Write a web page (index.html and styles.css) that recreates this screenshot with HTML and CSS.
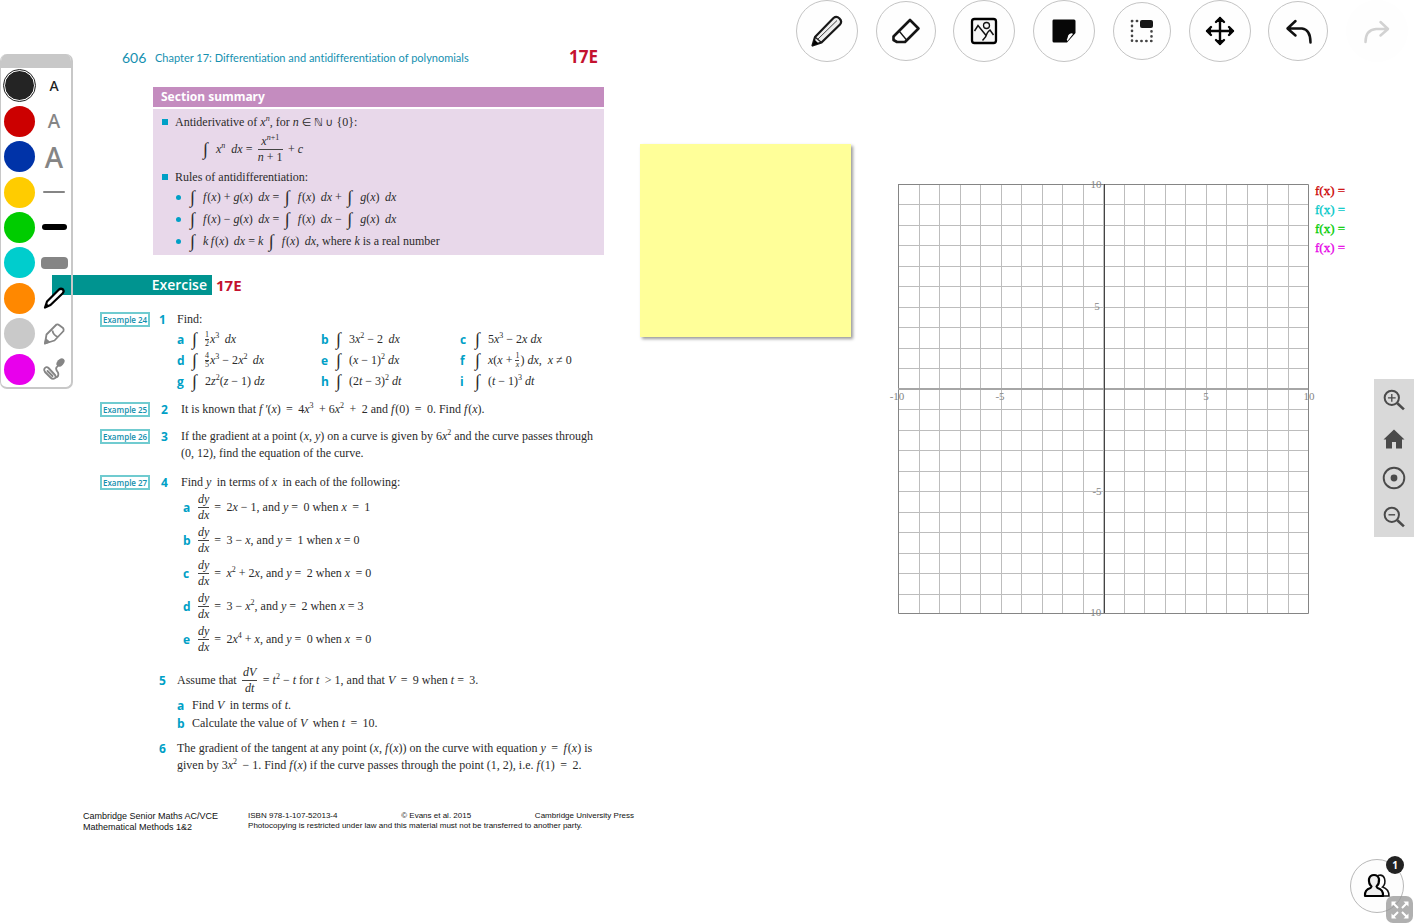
FILE: index.html
```html
<!DOCTYPE html>
<html lang="en">
<head>
<meta charset="utf-8">
<title>Whiteboard</title>
<link rel="stylesheet" href="styles.css">
</head>
<body>
<main class="board">

<article class="doc">
  <header class="doc-head">
    <span class="page-no">606</span>
    <span class="chapter">Chapter 17: Differentiation and antidifferentiation of polynomials</span>
    <span class="section-no">17E</span>
  </header>

  <section class="summary">
    <h2>Section summary</h2>
    <div class="summary-body">
      <p class="square"><span>Antiderivative of <i>x</i><sup><i>n</i></sup>, for <i>n</i> <span class="set">∈ ℕ ∪</span> {0}:</span></p>
      <p class="formula"><span><span class="int">∫</span><i>x</i><sup><i>n</i></sup>&nbsp; <i>dx</i> =&nbsp;&thinsp;</span><span class="frac"><span><i>x</i><sup><i>n</i>+1</sup></span><span><i>n</i> + 1</span></span><span>&nbsp;&thinsp;+ <i>c</i></span></p>
      <p class="square">Rules of antidifferentiation:</p>
      <ul class="rules">
        <li><span><span class="int">∫</span><i>f</i>&hairsp;(<i>x</i>) + <i>g</i>(<i>x</i>)&thinsp; <i>dx</i> =&thinsp; <span class="int">∫</span><i>f</i>&hairsp;(<i>x</i>)&thinsp; <i>dx</i> +&thinsp; <span class="int">∫</span><i>g</i>(<i>x</i>)&thinsp; <i>dx</i></span></li>
        <li><span><span class="int">∫</span><i>f</i>&hairsp;(<i>x</i>) − <i>g</i>(<i>x</i>)&thinsp; <i>dx</i> =&thinsp; <span class="int">∫</span><i>f</i>&hairsp;(<i>x</i>)&thinsp; <i>dx</i> −&thinsp; <span class="int">∫</span><i>g</i>(<i>x</i>)&thinsp; <i>dx</i></span></li>
        <li><span><span class="int">∫</span><i>k&thinsp;f</i>&hairsp;(<i>x</i>)&thinsp; <i>dx</i> = <i>k</i>&thinsp; <span class="int">∫</span><i>f</i>&hairsp;(<i>x</i>)&thinsp; <i>dx</i>, where <i>k</i> is a real number</span></li>
      </ul>
    </div>
  </section>

  <h2 class="exercise"><span class="exercise-bar">Exercise</span><span class="exercise-no">17E</span></h2>

  <section class="question q1">
    <span><span class="tag">Example 24</span></span><b class="num">1</b>
    <div>
      <p>Find:</p>
      <div class="parts">
        <p><b>a</b><span><span class="int">∫</span><span class="frac small"><span>1</span><span>2</span></span>&hairsp;<i>x</i><sup>3</sup>&thinsp; <i>dx</i></span></p>
        <p><b>b</b><span><span class="int">∫</span>3<i>x</i><sup>2</sup> − 2&thinsp; <i>dx</i></span></p>
        <p><b>c</b><span><span class="int">∫</span>5<i>x</i><sup>3</sup> − 2<i>x</i> <i>dx</i></span></p>
        <p><b>d</b><span><span class="int">∫</span><span class="frac small"><span>4</span><span>5</span></span>&hairsp;<i>x</i><sup>3</sup> − 2<i>x</i><sup>2</sup>&thinsp; <i>dx</i></span></p>
        <p><b>e</b><span><span class="int">∫</span>(<i>x</i> − 1)<sup>2</sup> <i>dx</i></span></p>
        <p><b>f</b><span><span class="int">∫</span><i>x</i>(<i>x</i> + <span class="frac small"><span>1</span><span><i>x</i></span></span>&hairsp;) <i>dx</i>,&ensp;<i>x</i> ≠ 0</span></p>
        <p><b>g</b><span><span class="int">∫</span>2<i>z</i><sup>2</sup>(<i>z</i> − 1) <i>dz</i></span></p>
        <p><b>h</b><span><span class="int">∫</span>(2<i>t</i> − 3)<sup>2</sup> <i>dt</i></span></p>
        <p><b>i</b><span><span class="int">∫</span>(<i>t</i> − 1)<sup>3</sup> <i>dt</i></span></p>
      </div>
    </div>
  </section>

  <section class="question inset q2">
    <span><span class="tag">Example 25</span></span><b class="num">2</b>
    <p>It is known that <i>f&thinsp;′</i>(<i>x</i>)&thinsp; =&thinsp; 4<i>x</i><sup>3</sup>&thinsp; + 6<i>x</i><sup>2</sup>&thinsp; +&thinsp; 2 and <i>f</i>&hairsp;(0)&thinsp; =&thinsp; 0. Find <i>f</i>&hairsp;(<i>x</i>).</p>
  </section>

  <section class="question inset q3">
    <span><span class="tag">Example 26</span></span><b class="num">3</b>
    <p>If the gradient at a point (<i>x</i>, <i>y</i>) on a curve is given by 6<i>x</i><sup>2</sup> and the curve passes through<br>(0, 12), find the equation of the curve.</p>
  </section>

  <section class="question inset q4">
    <span><span class="tag">Example 27</span></span><b class="num">4</b>
    <div>
      <p>Find <i>y</i>&thinsp; in terms of <i>x</i>&thinsp; in each of the following:</p>
      <div class="derivs">
        <p><b>a</b><span class="frac"><span><i>dy</i></span><span><i>dx</i></span></span><span>=&thinsp; 2<i>x</i> − 1, and <i>y</i> =&thinsp; 0 when <i>x</i>&thinsp; =&thinsp; 1</span></p>
        <p><b>b</b><span class="frac"><span><i>dy</i></span><span><i>dx</i></span></span><span>=&thinsp; 3 − <i>x</i>, and <i>y</i> =&thinsp; 1 when <i>x</i> = 0</span></p>
        <p><b>c</b><span class="frac"><span><i>dy</i></span><span><i>dx</i></span></span><span>=&thinsp; <i>x</i><sup>2</sup> + 2<i>x</i>, and <i>y</i> =&thinsp; 2 when <i>x</i>&thinsp; = 0</span></p>
        <p><b>d</b><span class="frac"><span><i>dy</i></span><span><i>dx</i></span></span><span>=&thinsp; 3 − <i>x</i><sup>2</sup>, and <i>y</i> =&thinsp; 2 when <i>x</i> = 3</span></p>
        <p><b>e</b><span class="frac"><span><i>dy</i></span><span><i>dx</i></span></span><span>=&thinsp; 2<i>x</i><sup>4</sup> + <i>x</i>, and <i>y</i> =&thinsp; 0 when <i>x</i>&thinsp; = 0</span></p>
      </div>
    </div>
  </section>

  <section class="question q5">
    <span></span><b class="num">5</b>
    <div>
      <p class="tall"><span>Assume that&nbsp;&thinsp;</span><span class="frac"><span>&hairsp;<i>dV</i>&hairsp;</span><span><i>dt</i></span></span><span>&nbsp;&thinsp;= <i>t</i><sup>2</sup> − <i>t</i> for <i>t</i>&thinsp; &gt; 1, and that <i>V</i>&thinsp; =&thinsp; 9 when <i>t</i> =&thinsp; 3.</span></p>
      <p class="sub"><b>a</b><span>Find <i>V</i>&thinsp; in terms of <i>t</i>.</span></p>
      <p class="sub"><b>b</b><span>Calculate the value of <i>V</i>&thinsp; when <i>t</i>&thinsp; =&thinsp; 10.</span></p>
    </div>
  </section>

  <section class="question q6">
    <span></span><b class="num">6</b>
    <p>The gradient of the tangent at any point (<i>x</i>, <i>f</i>&hairsp;(<i>x</i>)) on the curve with equation <i>y</i>&thinsp; =&thinsp; <i>f</i>&hairsp;(<i>x</i>) is<br>given by 3<i>x</i><sup>2</sup>&thinsp; − 1. Find <i>f</i>&hairsp;(<i>x</i>) if the curve passes through the point (1, 2), i.e. <i>f</i>&hairsp;(1)&thinsp; =&thinsp; 2.</p>
  </section>

  <footer class="imprint">
    <p class="series">Cambridge Senior Maths AC/VCE<br>Mathematical Methods 1&amp;2</p>
    <div class="rights">
      <p class="rights-row"><span>ISBN 978-1-107-52013-4</span><span>© Evans et al. 2015</span><span>Cambridge University Press</span></p>
      <p>Photocopying is restricted under law and this material must not be transferred to another party.</p>
    </div>
  </footer>
</article>

<div class="sticky"></div>

<section class="graph">
  <svg class="plot" viewBox="0 0 430 446" width="430" height="446" role="img" aria-label="Coordinate grid">
    <defs><pattern id="cell" x="10" y="10" width="41" height="41" patternUnits="userSpaceOnUse">
      <path d="M.5 0V41M21.5 0V41M0 .5H41M0 20.500H41" stroke="#bdbdbd" fill="none"/></pattern></defs>
    <rect x="10" y="10" width="410" height="429" fill="url(#cell)"/>
    <path d="M10.500 10V439.500H420.500V10.500H10" fill="none" stroke="#858585"/>
    <path d="M10 215H420" stroke="#a6a6a6" stroke-width="2"/><path d="M216.500 10V439" stroke="#444"/>
    <g class="axis-text">
      <text x="208" y="14" text-anchor="middle">10</text><text x="209" y="136" text-anchor="middle">5</text>
      <text x="209" y="321" text-anchor="middle">-5</text><text x="206" y="442" text-anchor="middle">-10</text>
      <text x="9" y="226" text-anchor="middle">-10</text><text x="112" y="226" text-anchor="middle">-5</text>
      <text x="318" y="226" text-anchor="middle">5</text><text x="421" y="226" text-anchor="middle">10</text>
    </g>
  </svg>
  <ul class="functions">
    <li class="fn-red">f(x) =</li><li class="fn-cyan">f(x) =</li><li class="fn-green">f(x) =</li><li class="fn-pink">f(x) =</li>
  </ul>
</section>
</main>

<aside class="palette" aria-label="Pen palette">
  <div class="palette-grip"></div>
  <div class="palette-grid">
    <button class="swatch black selected" aria-label="Black"></button><button class="txt t1" aria-label="Small text">A</button>
    <button class="swatch red" aria-label="Red"></button><button class="txt t2" aria-label="Medium text">A</button>
    <button class="swatch blue" aria-label="Blue"></button><button class="txt t3" aria-label="Large text">A</button>
    <button class="swatch yellow" aria-label="Yellow"></button><button aria-label="Thin line"><span class="stroke s1"></span></button>
    <button class="swatch green" aria-label="Green"></button><button aria-label="Medium line"><span class="stroke s2"></span></button>
    <button class="swatch cyan" aria-label="Cyan"></button><button aria-label="Thick line"><span class="stroke s3"></span></button>
    <button class="swatch orange" aria-label="Orange"></button>
    <button aria-label="Pen"><svg width="24" height="24" viewBox="0 0 24 24"><path d="M3 21.500L5 15.500L17 3.500Q19 2 21 3.500Q22.500 5.500 20.500 7.500L8.500 19Z" fill="#fff" stroke="#000" stroke-width="2.200" stroke-linejoin="round"/><path d="M3 21.500l2-4 2 2.500z"/></svg></button>
    <button class="swatch grey" aria-label="Grey"></button>
    <button aria-label="Highlighter"><svg width="24" height="24" viewBox="0 0 24 24" fill="none" stroke="#858585" stroke-width="1.800" stroke-linejoin="round"><path d="M3 21.500L4.500 12.500L14.500 2.500Q16 2 17 3L21 6Q22 7 21.500 9L12.500 18.500ZM10.500 8.500Q11 13 16 15"/><path d="M3 21.500l1-4 3 2.500z" fill="#858585"/></svg></button>
    <button class="swatch pink" aria-label="Magenta"></button>
    <button aria-label="Laser pen"><svg width="24" height="24" viewBox="0 0 24 24" fill="none" stroke="#858585" stroke-width="1.900" stroke-linecap="round" stroke-linejoin="round"><path d="M2.500 11.500Q4.500 9 6.500 11L13 18Q14.500 20.500 12.500 21.500Q10.500 22.500 8.500 20.500L3 15Q1.500 13 2.500 11.500ZM5.500 14l5 5M13.500 20.500Q17.500 19.500 16 15.500Q12.500 11 15.500 9.500"/><ellipse cx="18.500" cy="5.500" rx="4.800" ry="3.200" transform="rotate(-48 18.500 5.500)" fill="#858585" stroke="none"/></svg></button>
  </div>
</aside>

<nav class="tools" aria-label="Tools">
  <button aria-label="Pencil"><svg width="34" height="34" viewBox="0 0 34 34"><path d="M2.500 31.500L5 23L23.500 4Q26.500 1.500 29.500 4.500Q32.500 7.500 30 10.500L11.500 28.500Z" fill="#eee" stroke="#181818" stroke-width="2.200" stroke-linejoin="round"/><path d="M8 25L27 6.500" stroke="#444" stroke-width="1"/><path d="M5 23l6.500 5.500" stroke="#181818" stroke-width="1.200"/><path d="M2.500 31.500l2-6 4 4z"/></svg></button>
  <button class="md" aria-label="Eraser"><svg width="30" height="30" viewBox="0 0 30 30"><path d="M2.500 20.500L19 4L27.500 12.500L14 26H6L2.500 24Z" fill="#fff" stroke="#151515" stroke-width="2.600" stroke-linejoin="round"/><path d="M8.500 15.500L16 24.500" stroke="#151515" stroke-width="1.300"/></svg></button>
  <button aria-label="Image"><svg width="28" height="28" viewBox="0 0 28 28" fill="none" stroke="#111"><rect x="2" y="2" width="24" height="24" rx="2.500" fill="#f7f7f7" stroke="#000" stroke-width="2.300"/><circle cx="16.500" cy="8.500" r="3" stroke-width="1.300"/><path d="M4.500 14L8 8.500L16.500 19M12.500 23.500L15.500 20Q17 15 20 13L23.500 18" stroke-width="1.500"/></svg></button>
  <button aria-label="Sticky note"><svg width="24" height="24" viewBox="0 0 24 24"><path d="M1.500.5H22Q23.500.5 23.500 2V14L15 23.500H2Q.5 23.500.5 22V2Q.5.5 1.500.5Z" fill="#070707"/><path d="M15.500 22Q14 21 15.500 19Q16 15.500 17.500 15Q20 13.500 21 15Z" fill="#fff"/></svg></button>
  <button class="sm" aria-label="Select"><svg width="24" height="24" viewBox="0 0 24 24"><path d="M2 2V22H21.500V9M2 2H9" fill="none" stroke="#444" stroke-width="2.600" stroke-dasharray=".2 4.700" stroke-linecap="round"/><rect x="10" y="1" width="13" height="8" rx="2" fill="#181818"/></svg></button>
  <button aria-label="Move"><svg width="30" height="30" viewBox="0 0 30 30" fill="none" stroke="#050505" stroke-width="2.400" stroke-linecap="round" stroke-linejoin="round"><path d="M15 2V28M2 15H28M11 6l4-4 4 4M11 24l4 4 4-4M6 11l-4 4 4 4M24 11l4 4-4 4"/><path d="M11.500 6l3.500-4 3.500 4zM11.500 24l3.500 4 3.500-4zM6 11.500l-4 3.500 4 3.500zM24 11.500l4 3.500-4 3.500z" fill="#050505" stroke="none"/></svg></button>
  <button class="md" aria-label="Undo"><svg width="28" height="28" viewBox="0 0 28 28" fill="none" stroke="#111" stroke-width="2.500" stroke-linecap="round" stroke-linejoin="round"><path d="M11.500 4L3.500 11.500L11.500 18.500M4 11.500H18Q26.500 12.500 26.500 25.500"/></svg></button>
  <button class="off" aria-label="Redo" disabled><svg width="28" height="28" viewBox="0 0 28 28" fill="none" stroke="#d2d2d2" stroke-width="2.500" stroke-linecap="round" stroke-linejoin="round"><path d="M17.500 5L25 12L17.500 18.500M24.500 12H13Q2.500 13 2.500 25"/></svg></button>
</nav>

<nav class="zoom" aria-label="View">
  <button aria-label="Zoom in"><svg width="22" height="22" viewBox="1 1 20 20" fill="none" stroke="#4a4a4a"><circle cx="9" cy="9" r="6.500" stroke-width="1.800"/><path d="M5.500 9h7M9 5.500v7" stroke-width="1.200"/><path d="M14 14l6 5.500" stroke-width="2.400"/></svg></button>
  <button aria-label="Home"><svg width="22" height="22" viewBox="0 0 22 22" fill="#4a4a4a"><path d="M11 1.500L21.500 11.500H19V20.500H13V14H9V20.500H3V11.500H.5Z"/></svg></button>
  <button aria-label="Center"><svg width="24" height="24" viewBox="0 0 24 24"><circle cx="12" cy="12" r="10.300" fill="none" stroke="#4a4a4a" stroke-width="1.900"/><circle cx="12" cy="12" r="3.400" fill="#4a4a4a"/></svg></button>
  <button aria-label="Zoom out"><svg width="22" height="22" viewBox="1 1 20 20" fill="none" stroke="#4a4a4a"><circle cx="9" cy="9" r="6.500" stroke-width="1.800"/><path d="M6 9h6" stroke-width="1.300"/><path d="M14 14l6 5.500" stroke-width="2.400"/></svg></button>
</nav>

<button class="people" aria-label="Participants"><svg width="28" height="26" viewBox="0 0 28 26"><path d="M15 2.500Q20 1 21.500 5.500Q23 11 19.500 14Q26 16 26 23H19" fill="#fff" stroke="#111" stroke-width="1.500"/><path d="M2 23Q1.500 16.500 7.500 15L8.500 13.500Q5.500 10.500 6 6Q7 2 11 2T16 6Q16.500 10.500 13.500 13.500L14.500 15Q20.500 16.500 20 23Z" fill="#eee" stroke="#000" stroke-width="2.200" stroke-linejoin="round"/></svg><span class="badge">1</span></button>
<button class="expand" aria-label="Full screen"><svg width="20" height="20" viewBox="0 0 20 20" fill="#fff" stroke="#fff" stroke-width="2"><path d="M3 3l5 5M17 3l-5 5M3 17l5-5M17 17l-5-5"/><path d="M1.500 6.500v-5h5zM13.500 1.500h5v5zM1.500 13.500v5h5zM18.500 13.500v5h-5z" stroke="none"/></svg></button>
</body>
</html>
```
FILE: styles.css
```css
* { box-sizing: border-box; }
body { margin: 0; background: #fff; font-family: "Liberation Sans", Arial, sans-serif; }
p, h2, ul { margin: 0; padding: 0; }
ul { list-style: none; }
button { display: flex; align-items: center; justify-content: center; margin: 0; padding: 0; border: 0; background: none; color: inherit; font: inherit; cursor: pointer; }

/* canvas and the objects placed on it */
.board { position: relative; min-height: 100vh; overflow: hidden; }
.doc { position: absolute; left: 52px; top: 47px; width: 582px; color: #2b2b2b; font: 12px/17px "Liberation Serif", "Times New Roman", "DejaVu Sans", serif; }
.sticky { position: absolute; left: 640px; top: 144px; width: 211px; height: 193px; background: #ff9; box-shadow: 2px 2px 3px rgba(0, 0, 0, .4); }
.graph { position: absolute; left: 888px; top: 174px; display: flex; }

/* page header */
.doc-head { display: flex; align-items: center; height: 20px; padding: 0 36px 0 70px; color: #1590b0; font-family: Lato, sans-serif; font-variant-ligatures: none; line-height: 15px; }
.page-no { width: 33px; font-size: 14px; }
.chapter { flex: 1; font-size: 11px; white-space: nowrap; }
.section-no, .exercise-no { color: #c4122f; font: bold 17px/20px "Open Sans", sans-serif; }

/* summary box */
.summary { margin: 20px 30px 0 101px; }
.summary h2 { height: 20px; padding-left: 8px; background: #c48cbf; color: #fff; font: bold 12px/20px "Noto Sans", sans-serif; }
.summary-body { margin-top: 2px; padding: 4px 9px 3px; background: #e8d8ea; }
.square { display: flex; align-items: center; height: 18px; }
.square::before { content: ""; width: 6px; height: 6px; margin-right: 7px; background: #00a0c6; }
.formula { display: flex; align-items: center; height: 37px; padding-left: 41px; }
.rules li { display: flex; align-items: center; height: 22px; padding-left: 14px; white-space: nowrap; }
.rules li::before { content: ""; width: 5px; height: 5px; margin-right: 9px; border-radius: 50%; background: #00a0c6; }

/* mathematics */
sup { font-size: 8px; line-height: 0; vertical-align: 5px; }
.int { display: inline-block; width: 13px; font-size: 18px; font-style: italic; line-height: 17px; vertical-align: -2px; }
.set { font-size: 11px; }
.frac { display: inline-flex; flex-direction: column; align-items: center; vertical-align: middle; line-height: 15px; }
.frac > span:first-child { align-self: stretch; border-bottom: 1px solid #444; text-align: center; }
.frac.small { font-size: 8px; line-height: 8px; }

/* exercise */
.exercise { display: flex; height: 20px; margin-top: 20px; }
.exercise-bar { width: 160px; padding-right: 5px; background: #009490; color: #fff; font: 600 14px/20px "Open Sans", sans-serif; text-align: right; }
.exercise-no { padding-left: 4px; font-size: 15px; }
.question { display: grid; grid-template-columns: 59px 18px 1fr; margin-left: 48px; }
.question.inset { grid-template-columns: 61px 20px 1fr; }
.question b { color: #00a0c6; font-family: "Open Sans", sans-serif; }
.tag { display: inline-block; padding: 0 1px; border: 2px solid #70cbd0; color: #138fae; font: 600 8px/11px "Open Sans", sans-serif; white-space: nowrap; }
.q1 { margin-top: 16px; }
.q2 { margin-top: 9px; }
.q3 { margin-top: 10px; }
.q4 { margin-top: 12px; }
.q5 { margin-top: 8px; }
.q6 { margin-top: 7px; }
.q5 .num { line-height: 33px; }
.parts { display: grid; grid-template-columns: 144px 139px 1fr; grid-auto-rows: 21px; margin-top: 1px; }
.parts p { display: flex; align-items: center; white-space: nowrap; }
.parts b { width: 15px; }
.derivs p { display: flex; align-items: center; height: 33px; gap: 5px; padding-left: 2px; }
.derivs b { width: 10px; }
.tall { display: flex; align-items: center; height: 33px; }
.sub { display: flex; height: 18px; }
.sub b { width: 15px; }

/* imprint */
.imprint { display: flex; gap: 30px; margin-top: 37px; padding-left: 31px; color: #111; font: 8px/10px "Liberation Sans", Arial, sans-serif; white-space: nowrap; }
.series { font-size: 9px; line-height: 11px; }
.rights { flex: 1; }
.rights-row { display: flex; justify-content: space-between; }

/* graph */
.axis-text { fill: #858585; font: 11px "Liberation Serif", serif; }
.functions { padding: 7px 0 0; margin-left: -3px; font: 13px/19px "Liberation Serif", serif; -webkit-text-stroke: 0.3px; }
.fn-red { color: #c00; }
.fn-cyan { color: #00c8c8; }
.fn-green { color: #0c0; }
.fn-pink { color: #e600e6; }

/* pen palette */
.palette { position: absolute; left: 0; top: 54px; width: 73px; border: 1px solid #c8c8c8; border-width: 0 2px 2px 1px; border-radius: 7px; overflow: hidden; }
.palette-grip { height: 14px; background: #c8c8c8; }
.palette-grid { display: grid; grid-template-columns: 36px 34px; grid-auto-rows: 1fr; height: 319px; align-items: center; justify-items: center; }
.swatch { width: 31px; height: 31px; border-radius: 50%; }
.selected { border: 1px solid #fff; outline: 1px solid #222; }
.black { background: #242424; }
.red { background: #c00; }
.blue { background: #0033a8; }
.yellow { background: #fc0; }
.green { background: #0c0; }
.cyan { background: #00cdcd; }
.orange { background: #f80; }
.grey { background: #c9c9c9; }
.pink { background: #e800ec; }
.txt { color: #858585; font-family: "Noto Sans", sans-serif; font-weight: 500; line-height: 30px; }
.t1 { color: #222; font-size: 14px; }
.t2 { font-size: 19px; }
.t3 { font-size: 28px; }
.stroke { display: block; width: 22px; height: 2px; border-radius: 4px; background: #858585; }
.s2 { width: 25px; height: 6px; background: #000; }
.s3 { width: 27px; height: 12px; }

/* top tools */
.tools { position: absolute; right: 6px; top: 0; display: flex; align-items: center; justify-content: space-between; width: 612px; height: 62px; }
.tools button { width: 62px; height: 62px; border: 1px solid #c4c4c4; border-radius: 50%; background: #fefefe; }
.tools .md { width: 60px; height: 60px; }
.tools .sm { width: 58px; height: 58px; }
.tools .off { border-color: transparent; }

/* view controls */
.zoom { position: absolute; right: 0; top: 379px; padding: 1px 0; width: 40px; background: #d9d9d9; }
.zoom button { width: 39px; height: 39px; }

/* corner controls */
.people { position: absolute; right: 10px; bottom: 11px; width: 54px; height: 54px; border: 1px solid #b8b8b8; border-radius: 50%; background: #fdfdfd; }
.badge { position: absolute; right: -1px; top: -4px; width: 18px; height: 18px; border-radius: 50%; background: #222; color: #fff; font: bold 10px/18px "Noto Sans", sans-serif; }
.expand { position: absolute; right: 1px; bottom: 1px; width: 27px; height: 27px; border-radius: 7px; background: rgba(150, 150, 150, .75); }
```
